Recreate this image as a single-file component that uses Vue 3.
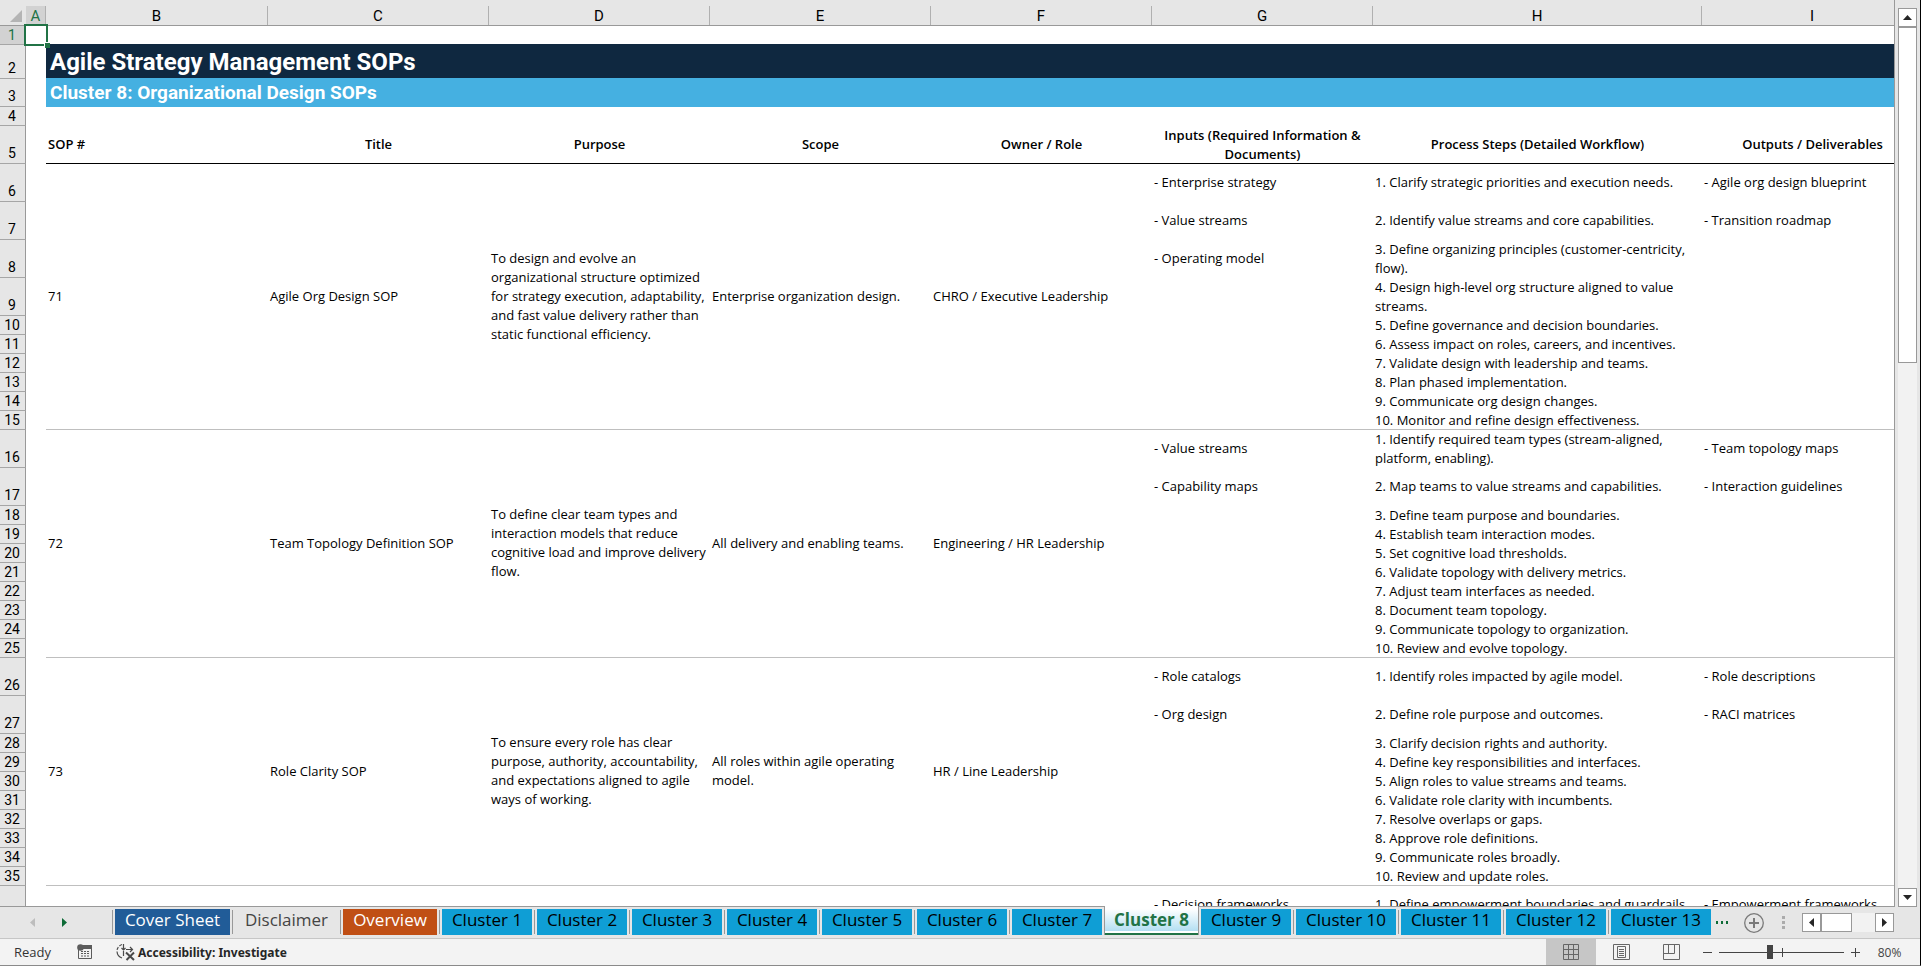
<script setup>
import { ref } from 'vue';

// Column widths in pixels at 80% zoom
const columns = [
  { name: 'A', width: 20 },
  { name: 'B', width: 222 },
  { name: 'C', width: 221 },
  { name: 'D', width: 221 },
  { name: 'E', width: 221 },
  { name: 'F', width: 221 },
  { name: 'G', width: 221 },
  { name: 'H', width: 329 },
  { name: 'I', width: 221 }
];

const headings = [
  'SOP #',
  'Title',
  'Purpose',
  'Scope',
  'Owner / Role',
  'Inputs (Required Information &\nDocuments)',
  'Process Steps (Detailed Workflow)',
  'Outputs / Deliverables'
];

const sops = [
  {
    id: 71,
    firstRow: 6,
    tallRows: 4,
    title: 'Agile Org Design SOP',
    purpose:
      'To design and evolve an\norganizational structure optimized\nfor strategy execution, adaptability,\nand fast value delivery rather than\nstatic functional efficiency.',
    scope: 'Enterprise organization design.',
    owner: 'CHRO / Executive Leadership',
    inputs: ['- Enterprise strategy', '- Value streams', '- Operating model'],
    steps: [
      '1. Clarify strategic priorities and execution needs.',
      '2. Identify value streams and core capabilities.',
      '3. Define organizing principles (customer-centricity,\nflow).',
      '4. Design high-level org structure aligned to value\nstreams.',
      '5. Define governance and decision boundaries.',
      '6. Assess impact on roles, careers, and incentives.',
      '7. Validate design with leadership and teams.',
      '8. Plan phased implementation.',
      '9. Communicate org design changes.',
      '10. Monitor and refine design effectiveness.'
    ],
    outputs: ['- Agile org design blueprint', '- Transition roadmap']
  },
  {
    id: 72,
    firstRow: 16,
    tallRows: 2,
    title: 'Team Topology Definition SOP',
    purpose:
      'To define clear team types and\ninteraction models that reduce\ncognitive load and improve delivery\nflow.',
    scope: 'All delivery and enabling teams.',
    owner: 'Engineering / HR Leadership',
    inputs: ['- Value streams', '- Capability maps'],
    steps: [
      '1. Identify required team types (stream-aligned,\nplatform, enabling).',
      '2. Map teams to value streams and capabilities.',
      '3. Define team purpose and boundaries.',
      '4. Establish team interaction modes.',
      '5. Set cognitive load thresholds.',
      '6. Validate topology with delivery metrics.',
      '7. Adjust team interfaces as needed.',
      '8. Document team topology.',
      '9. Communicate topology to organization.',
      '10. Review and evolve topology.'
    ],
    outputs: ['- Team topology maps', '- Interaction guidelines']
  },
  {
    id: 73,
    firstRow: 26,
    tallRows: 2,
    title: 'Role Clarity SOP',
    purpose:
      'To ensure every role has clear\npurpose, authority, accountability,\nand expectations aligned to agile\nways of working.',
    scope: 'All roles within agile operating\nmodel.',
    owner: 'HR / Line Leadership',
    inputs: ['- Role catalogs', '- Org design'],
    steps: [
      '1. Identify roles impacted by agile model.',
      '2. Define role purpose and outcomes.',
      '3. Clarify decision rights and authority.',
      '4. Define key responsibilities and interfaces.',
      '5. Align roles to value streams and teams.',
      '6. Validate role clarity with incumbents.',
      '7. Resolve overlaps or gaps.',
      '8. Approve role definitions.',
      '9. Communicate roles broadly.',
      '10. Review and update roles.'
    ],
    outputs: ['- Role descriptions', '- RACI matrices']
  }
];

const tabs = [
  { name: 'Cover Sheet', width: 120, kind: 'navy' },
  { name: 'Disclaimer', width: 108, kind: 'plain' },
  { name: 'Overview', width: 99, kind: 'orange' },
  ...Array.from({ length: 13 }, (_, i) => ({
    name: `Cluster ${i + 1}`,
    width: i < 9 ? 95 : 105,
    kind: 'blue'
  }))
];

const activeTab = ref('Cluster 8');
const zoom = ref(80);

// Cells holding two lines fill their row completely
function isWrapped(text) {
  return text.includes('\n');
}
</script>

<template>
  <div class="workbook">
    <div class="main">
      <div class="sheet">
        <table class="grid">
          <colgroup>
            <col class="col-head" />
            <col v-for="c in columns" :key="c.name" :style="{ width: `${c.width}px` }" />
          </colgroup>
          <thead>
            <tr class="letters">
              <th class="corner">
                <svg width="26" height="25" viewBox="0 0 26 25"><path d="M22 10V22H10z" fill="#b4b4b4" /></svg>
              </th>
              <th v-for="c in columns" :key="c.name" scope="col" :class="{ selected: c.name === 'A' }">
                <span>{{ c.name }}</span>
              </th>
            </tr>
          </thead>
          <tbody>
            <tr class="short">
              <th scope="row" class="num selected">1</th>
              <td class="cursor-cell"><div class="cursor"></div></td>
              <td colspan="8"></td>
            </tr>
            <tr class="title-row">
              <th scope="row" class="num">2</th>
              <td></td>
              <td colspan="8" class="title">Agile Strategy Management SOPs</td>
            </tr>
            <tr class="subtitle-row">
              <th scope="row" class="num">3</th>
              <td></td>
              <td colspan="8" class="subtitle">Cluster 8: Organizational Design SOPs</td>
            </tr>
            <tr class="short">
              <th scope="row" class="num">4</th>
              <td></td>
              <td colspan="8"></td>
            </tr>
            <tr class="tall headings">
              <th scope="row" class="num">5</th>
              <td></td>
              <th v-for="h in headings" :key="h" scope="col" class="heading" :class="{ wrapped: isWrapped(h) }">{{ h }}</th>
            </tr>
          </tbody>
          <tbody v-for="sop in sops" :key="sop.id">
            <tr
              v-for="(step, i) in sop.steps"
              :key="step"
              :class="[i < sop.tallRows ? 'tall' : 'short', { last: i === sop.steps.length - 1 }]"
            >
              <th scope="row" class="num">{{ sop.firstRow + i }}</th>
              <td class="gutter"></td>
              <template v-if="i === 0">
                <td rowspan="10" class="merged">{{ sop.id }}</td>
                <td rowspan="10" class="merged">{{ sop.title }}</td>
                <td rowspan="10" class="merged">{{ sop.purpose }}</td>
                <td rowspan="10" class="merged">{{ sop.scope }}</td>
                <td rowspan="10" class="merged">{{ sop.owner }}</td>
              </template>
              <td>{{ sop.inputs[i] }}</td>
              <td :class="{ wrapped: isWrapped(step) }">{{ step }}</td>
              <td>{{ sop.outputs[i] }}</td>
            </tr>
          </tbody>
          <tbody>
            <tr class="tall">
              <th scope="row" class="num">36</th>
              <td></td>
              <td colspan="5"></td>
              <td>- Decision frameworks</td>
              <td>1. Define empowerment boundaries and guardrails</td>
              <td>- Empowerment frameworks</td>
            </tr>
          </tbody>
        </table>
      </div>

      <div class="v-scroll">
        <button class="scroll-btn" aria-label="Scroll up">
          <svg width="9" height="5" viewBox="0 0 9 5"><path d="M0 5L4.500 0L9 5z" fill="#262626" /></svg>
        </button>
        <div class="v-track"><div class="v-thumb"></div></div>
        <button class="scroll-btn" aria-label="Scroll down">
          <svg width="9" height="5" viewBox="0 0 9 5"><path d="M0 0L4.500 5L9 0z" fill="#262626" /></svg>
        </button>
      </div>
    </div>

    <div class="tab-bar">
      <div class="tab-nav">
        <button aria-label="Previous sheets">
          <svg width="5" height="9" viewBox="0 0 5 9"><path d="M5 0V9L0 4.500z" fill="#bdbdbd" /></svg>
        </button>
        <button aria-label="Next sheets">
          <svg width="5" height="9" viewBox="0 0 5 9"><path d="M0 0V9L5 4.500z" fill="#0e6b37" /></svg>
        </button>
      </div>
      <div class="tabs">
        <div
          v-for="tab in tabs"
          :key="tab.name"
          class="tab-slot"
          :class="{ current: tab.name === activeTab }"
          :style="{ width: `${tab.width}px` }"
        >
          <button class="tab" :class="tab.kind" @click="activeTab = tab.name">{{ tab.name }}</button>
        </div>
      </div>
      <button class="more" aria-label="More sheets">
        <svg width="13" height="3" viewBox="0 0 13 3"><path d="M0 0h2v3H0zM5 0h2v3H5zM10 0h2v3h-2z" fill="#0e6b37" /></svg>
      </button>
      <button class="add" aria-label="New sheet">
        <svg width="20" height="20" viewBox="0 0 20 20" fill="none" stroke="#7a7a7a">
          <circle cx="10" cy="10" r="9.300" stroke-width="1.300" />
          <path d="M10 5v10M5 10h10" stroke-width="2" />
        </svg>
      </button>
      <div class="tab-space"></div>
      <svg class="grip" width="3" height="13" viewBox="0 0 3 13"><path d="M0 0h3v3H0zM0 5h3v3H0zM0 10h3v3H0z" fill="#ababab" /></svg>
      <div class="h-scroll">
        <button class="scroll-btn" aria-label="Scroll left">
          <svg width="5" height="9" viewBox="0 0 5 9"><path d="M5 0V9L0 4.500z" fill="#262626" /></svg>
        </button>
        <div class="h-track"><div class="h-thumb"></div></div>
        <button class="scroll-btn" aria-label="Scroll right">
          <svg width="5" height="9" viewBox="0 0 5 9"><path d="M0 0V9L5 4.500z" fill="#262626" /></svg>
        </button>
      </div>
    </div>

    <div class="status">
      <span class="ready">Ready</span>
      <button class="macro" aria-label="Record macro">
        <svg width="16" height="16" viewBox="0 0 16 16">
          <path d="M6 1h9v4H6z" fill="#5c5c5c" />
          <path d="M1.500 6v8.500h13V4" fill="none" stroke="#5c5c5c" />
          <path d="M4 7.500h2M7 7.500h2M10 7.500h2M4 9.500h2M7 9.500h2M10 9.500h2M4 12h2M7 12h2M10 12h2" stroke="#5c5c5c" />
          <circle cx="3.500" cy="3.500" r="3.300" fill="#5c5c5c" />
        </svg>
      </button>
      <button class="access">
        <svg width="20" height="18" viewBox="0 0 20 18" fill="none" stroke="#4a4a4a" stroke-width="1.200">
          <path d="M6 1.500A7.500 7.500 0 0 0 1 7" stroke-dasharray="3 1.500" />
          <path d="M1 8.500A7.500 7.500 0 0 0 6 15" />
          <path d="M7.500 1v6M5.500 5L7.500 7L9.500 5M10 6.500h6M14 4L16.500 6.500L14 9M7.500 8v5" />
          <path d="M10 9.500l8 7.500M18 9.500L10.500 17" stroke-width="2" />
        </svg>
        <span>Accessibility: Investigate</span>
      </button>
      <div class="status-space"></div>
      <button class="view on" aria-label="Normal view">
        <svg width="16" height="16" viewBox="0 0 16 16" fill="none" stroke="#666">
          <path d="M.5.5h15v15H.5zM5.500.5v15M10.500.5v15M.5 5.500h15M.5 10.500h15" />
        </svg>
      </button>
      <button class="view" aria-label="Page layout view">
        <svg width="17" height="16" viewBox="0 0 17 16" fill="none" stroke="#666">
          <path d="M.5.500h16v15H.5zM4.500 2.500h8v11h-8zM6 5.500h5M6 7.500h5M6 9.500h5M6 11.500h5" />
        </svg>
      </button>
      <button class="view" aria-label="Page break preview">
        <svg width="17" height="16" viewBox="0 0 17 16" fill="none" stroke="#666">
          <path d="M.5.5h16v15H.5zM.5 9.500h11V.5M5.500.5v9" />
        </svg>
      </button>
      <button class="zoom-btn" aria-label="Zoom out">
        <svg width="9" height="9" viewBox="0 0 9 9"><path d="M0 4.500h9" stroke="#444" /></svg>
      </button>
      <input v-model="zoom" class="zoom" type="range" min="0" max="200" aria-label="Zoom" />
      <button class="zoom-btn" aria-label="Zoom in">
        <svg width="9" height="9" viewBox="0 0 9 9"><path d="M0 4.500h9M4.500 0v9" stroke="#444" /></svg>
      </button>
      <button class="percent">{{ zoom }}%</button>
    </div>
  </div>
</template>

<style>
body {
  margin: 0;
  overflow: hidden;
}
</style>

<style scoped>
.workbook {
  display: flex;
  flex-direction: column;
  box-sizing: border-box;
  height: 100vh;
  background: #e6e6e6;
  border-right: 1px solid #000;
  border-bottom: 1px solid #8a8a8a;
  font-family: 'Open Sans', 'Noto Sans', sans-serif;
  color: #000;
}
button {
  display: flex;
  align-items: center;
  justify-content: center;
  padding: 0;
  border: 0;
  background: none;
  font-family: inherit;
  color: inherit;
}
svg {
  display: block;
  flex: none;
}

/* Sheet */
.main {
  display: flex;
  flex: 1;
  min-height: 0;
}
.sheet {
  flex: 1;
  min-width: 0;
  overflow: hidden;
  border-right: 1px solid #999;
  border-bottom: 1px solid #999;
  background: linear-gradient(#e6e6e6 25px, #fff 25px);
}
.grid {
  table-layout: fixed;
  width: max-content;
  border-spacing: 0;
  font-size: 13px;
  line-height: 19px;
}
.col-head {
  width: 26px;
}
.grid th,
.grid td {
  box-sizing: border-box;
  padding: 0 0 0 2px;
  text-align: left;
  vertical-align: middle;
  white-space: pre;
}
.grid .letters th {
  height: 26px;
  padding: 6px 0 0;
  background: #e6e6e6;
  border-bottom: 1px solid #999;
  font-family: Roboto, sans-serif;
  font-size: 15px;
  font-weight: 400;
  text-align: center;
}
.letters th span {
  display: block;
  height: 19px;
  line-height: 20px;
  border-right: 1px solid #b0b0b0;
}
.grid .letters .corner {
  padding: 0;
}
.letters .selected span {
  background: #d2d2d2;
  color: #217346;
}
.grid .num {
  padding: 0 1px 0 0;
  border-right: 1px solid #999;
  border-bottom: 1px solid #a6a6a6;
  background: #e6e6e6;
  font-family: Roboto, sans-serif;
  font-size: 14px;
  line-height: 18px;
  font-weight: 400;
  text-align: center;
  vertical-align: bottom;
}
.grid .num.selected {
  background: #d2d2d2;
  color: #217346;
}
.short {
  height: 19px;
}
.tall {
  height: 38px;
}
.title-row {
  height: 34px;
}
.subtitle-row {
  height: 28px;
}
.grid .tall td:not(.wrapped),
.grid .merged,
.grid .heading:not(.wrapped) {
  padding-bottom: 2px;
}
.grid .tall .num,
.grid .title-row .num,
.grid .subtitle-row .num {
  padding-bottom: 1px;
}
.grid .title {
  padding-left: 4px;
  background: #0f2840;
  box-shadow: 0 -1px 0 #0f2840;
  color: #fff;
  font-family: Roboto, sans-serif;
  font-size: 24px;
  line-height: 34px;
  font-weight: 700;
}
.grid .subtitle {
  padding-left: 4px;
  background: #45b0e1;
  box-shadow: 0 -1px 0 #45b0e1;
  color: #fff;
  font-family: Roboto, sans-serif;
  font-size: 19px;
  line-height: 28px;
  font-weight: 700;
}
.grid .heading {
  padding-left: 0;
  font-weight: 600;
  text-align: center;
  box-shadow: inset 0 -1px 0 #000;
}
.grid .heading:nth-child(3) {
  padding-left: 2px;
  text-align: left;
}
.last td:not(.gutter),
.merged {
  box-shadow: inset 0 -1px 0 #bfbfbf;
}
.cursor-cell {
  position: relative;
}
.cursor {
  position: absolute;
  inset: -2px -2px -1px -2px;
  border: 2px solid #217346;
}
.cursor::after {
  content: '';
  position: absolute;
  right: -4px;
  bottom: -4px;
  width: 5px;
  height: 5px;
  background: #217346;
  border-top: 1px solid #fff;
  border-left: 1px solid #fff;
}

/* Scroll bars */
.v-scroll {
  display: flex;
  flex-direction: column;
  width: 19px;
  padding: 8px 3px 0;
}
.scroll-btn {
  flex: none;
  box-sizing: border-box;
  width: 19px;
  height: 19px;
  background: #fff;
  border: 1px solid #999;
}
.v-track {
  flex: 1;
  background: #f2f2f2;
}
.v-thumb {
  box-sizing: border-box;
  height: 39%;
  background: #fff;
  border: 1px solid #999;
}
.h-scroll {
  display: flex;
  width: 92px;
  margin: 0 26px 0 17px;
}
.h-track {
  flex: 1;
  background: #f2f2f2;
}
.h-thumb {
  box-sizing: border-box;
  width: 31px;
  height: 19px;
  background: #fff;
  border: 1px solid #999;
}

/* Sheet tabs */
.tab-bar {
  display: flex;
  align-items: center;
  height: 31px;
  border-bottom: 1px solid #c6c6c6;
}
.tab-nav {
  display: flex;
  gap: 27px;
  width: 82px;
  padding-left: 30px;
}
.tabs {
  display: flex;
  align-self: flex-start;
}
.tab-slot {
  box-sizing: border-box;
  display: flex;
  padding: 2px 2px 0 3px;
  background: linear-gradient(#999, #999) 0 3px / 1px 24px no-repeat;
}
.tab {
  flex: 1;
  height: 26px;
  padding-bottom: 4px;
  font-size: 17px;
  line-height: 22px;
  white-space: nowrap;
}
.navy {
  background: #215c98;
  color: #fff;
}
.plain {
  color: #444;
}
.orange {
  background: #c04f15;
  color: #fff;
}
.blue {
  background: #0f9ed5;
}
.current {
  position: relative;
  z-index: 1;
  margin: -1px -1px 0 0;
  padding: 0;
  background: #fff;
}
.current + .tab-slot {
  background: none;
}
.current .tab {
  height: 29px;
  padding: 0 0 2px;
  border: solid #999;
  border-width: 0 1px;
  box-shadow: inset 0 -2px 0 #217346, inset 0 -4px 0 #fff;
  background: linear-gradient(#fff 10%, #a5d9f0);
  color: #217346;
  font-weight: 700;
}
.more {
  width: 13px;
  margin-left: 3px;
}
.add {
  margin-left: 15px;
}
.tab-space,
.status-space {
  flex: 1;
}

/* Status bar */
.status {
  display: flex;
  align-items: center;
  height: 26px;
  background: #f3f3f3;
  font-size: 13px;
  color: #333;
}
.ready {
  width: 63px;
  padding-left: 14px;
}
.access {
  gap: 2px;
  margin-left: 23px;
  color: #262626;
  font-family: 'Noto Sans', sans-serif;
  font-size: 12px;
  font-weight: 700;
}
.view {
  width: 50px;
  height: 26px;
}
.view.on {
  background: #c6c6c6;
}
.zoom-btn {
  margin: 0 7px;
}
.zoom {
  appearance: none;
  width: 125px;
  height: 16px;
  margin: 0;
  background:
    linear-gradient(#444, #444) 63px 4px / 1px 9px no-repeat,
    linear-gradient(#444, #444) 0 8px / 125px 1px no-repeat;
}
.zoom::-webkit-slider-thumb {
  appearance: none;
  width: 6px;
  height: 14px;
  background: #444;
}
.percent {
  width: 39px;
  margin: 0 11px 0 3px;
  font-size: 12px;
  color: #444;
}
</style>
